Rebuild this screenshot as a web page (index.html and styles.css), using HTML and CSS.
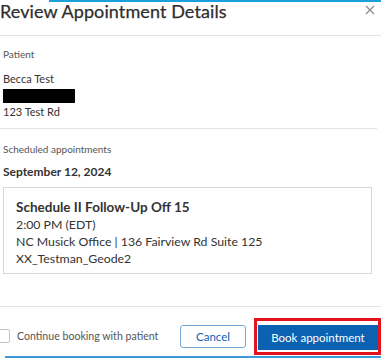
FILE: index.html
```html
<!DOCTYPE html>
<html lang="en">
<head>
    <meta charset="UTF-8">
    <title>Review Appointment Details</title>
    <link rel="stylesheet" href="styles.css">
</head>
<body>
    <div class="modal">
        <div class="focus-line"></div>
        <header class="modal-header">
            <h2 class="modal-title">Review Appointment Details</h2>
            <button class="close-btn" aria-label="Close">
                <svg width="10" height="10" viewBox="0 0 10 10">
                    <path d="M1 1 L9 9 M9 1 L1 9" stroke="#8a8a8a" stroke-width="1.2" fill="none"/>
                </svg>
            </button>
        </header>

        <section class="patient-section">
            <div class="label">Patient</div>
            <div class="patient-name">Becca Test</div>
            <div class="redacted"></div>
            <div class="patient-address">123 Test Rd</div>
        </section>

        <section class="appointments-section">
            <div class="label">Scheduled appointments</div>
            <div class="appt-date">September 12, 2024</div>
            <div class="appt-card">
                <div class="appt-title">Schedule II Follow-Up Off 15</div>
                <div class="appt-line">2:00 PM (EDT)</div>
                <div class="appt-line">NC Musick Office | 136 Fairview Rd Suite 125</div>
                <div class="appt-line">XX_Testman_Geode2</div>
            </div>
        </section>

        <footer class="modal-footer">
            <label class="continue">
                <span class="checkbox"></span>
                Continue booking with patient
            </label>
            <div class="actions">
                <button class="btn btn-cancel">Cancel</button>
                <div class="highlight">
                    <button class="btn btn-primary">Book appointment</button>
                </div>
            </div>
        </footer>
        <div class="bottom-line"></div>
    </div>
</body>
</html>
```
FILE: styles.css
```css
:root {
    --text: #333333;
    --muted: #555555;
    --blue: #0b62b3;
    --cyan: #1aa0dc;
    --line: #e3e3e3;
}

* {
    margin: 0;
    padding: 0;
    box-sizing: border-box;
}

body {
    background: #ffffff;
    color: var(--text);
    font-family: Lato, 'Open Sans', sans-serif;
    width: 381px;
    height: 358px;
    overflow: hidden;
}

.focus-line {
    height: 2px;
    margin-left: 49px;
    background: var(--cyan);
}

.modal-header {
    height: 34px;
    border-bottom: 1px solid var(--line);
    display: flex;
    justify-content: space-between;
    align-items: flex-start;
}

.modal-title {
    font-size: 18px;
    font-weight: 400;
    line-height: 18px;
    letter-spacing: 0.1px;
    color: #2e2e2e;
    -webkit-text-stroke: 0.25px #2e2e2e;
}

.close-btn {
    border: none;
    background: none;
    margin: 3px 6px 0 0;
    width: 10px;
    height: 10px;
    display: flex;
}

.label {
    font-size: 10px;
    color: var(--muted);
    line-height: 12px;
}

.patient-section {
    padding: 12px 0 0 3px;
    height: 93px;
    border-bottom: 1px solid var(--line);
    margin-right: 4px;
}

.patient-name {
    margin-top: 12px;
    font-size: 11px;
    line-height: 13px;
}

.redacted {
    margin-top: 4px;
    width: 72px;
    height: 14px;
    background: #000000;
}

.patient-address {
    margin-top: 2px;
    font-size: 11px;
    line-height: 13px;
}

.appointments-section {
    padding: 14px 9px 0 3px;
    height: 178px;
    border-bottom: 1px solid var(--line);
}

.appt-date {
    margin-top: 10px;
    font-size: 12px;
    font-weight: 700;
    line-height: 14px;
}

.appt-card {
    margin-top: 8px;
    height: 87px;
    border: 1px solid #d8d8d8;
    padding: 11px 12px 0;
}

.appt-title {
    font-size: 13.5px;
    font-weight: 700;
    line-height: 16px;
    margin-bottom: 1px;
}

.appt-line {
    font-size: 12.3px;
    line-height: 17px;
    color: var(--text);
}

.modal-footer {
    height: 49px;
    padding: 10px 0 1px;
    display: flex;
    align-items: center;
    justify-content: space-between;
}

.continue {
    display: flex;
    align-items: center;
    gap: 7px;
    font-size: 10.6px;
    color: var(--muted);
}

.checkbox {
    width: 10px;
    height: 14px;
    border: 1px solid #c4c4c4;
    border-left: none;
    border-radius: 0 2px 2px 0;
}

.actions {
    display: flex;
    align-items: center;
    gap: 8px;
}

.btn {
    font-family: inherit;
    font-size: 11.5px;
    height: 23px;
    border-radius: 3px;
}

.btn-cancel {
    width: 66px;
    background: #ffffff;
    color: var(--blue);
    border: 1px solid #74a7d6;
}

.highlight {
    border: 3px solid #e4141c;
    padding: 4px 0 3px 1px;
    width: 127px;
    height: 37px;
}

.btn-primary {
    width: 120px;
    height: 25px;
    background: var(--blue);
    color: #ffffff;
    border: none;
    border-radius: 0;
}

.bottom-line {
    height: 2px;
    margin-left: 5px;
    background: #3c9bd6;
}
```
